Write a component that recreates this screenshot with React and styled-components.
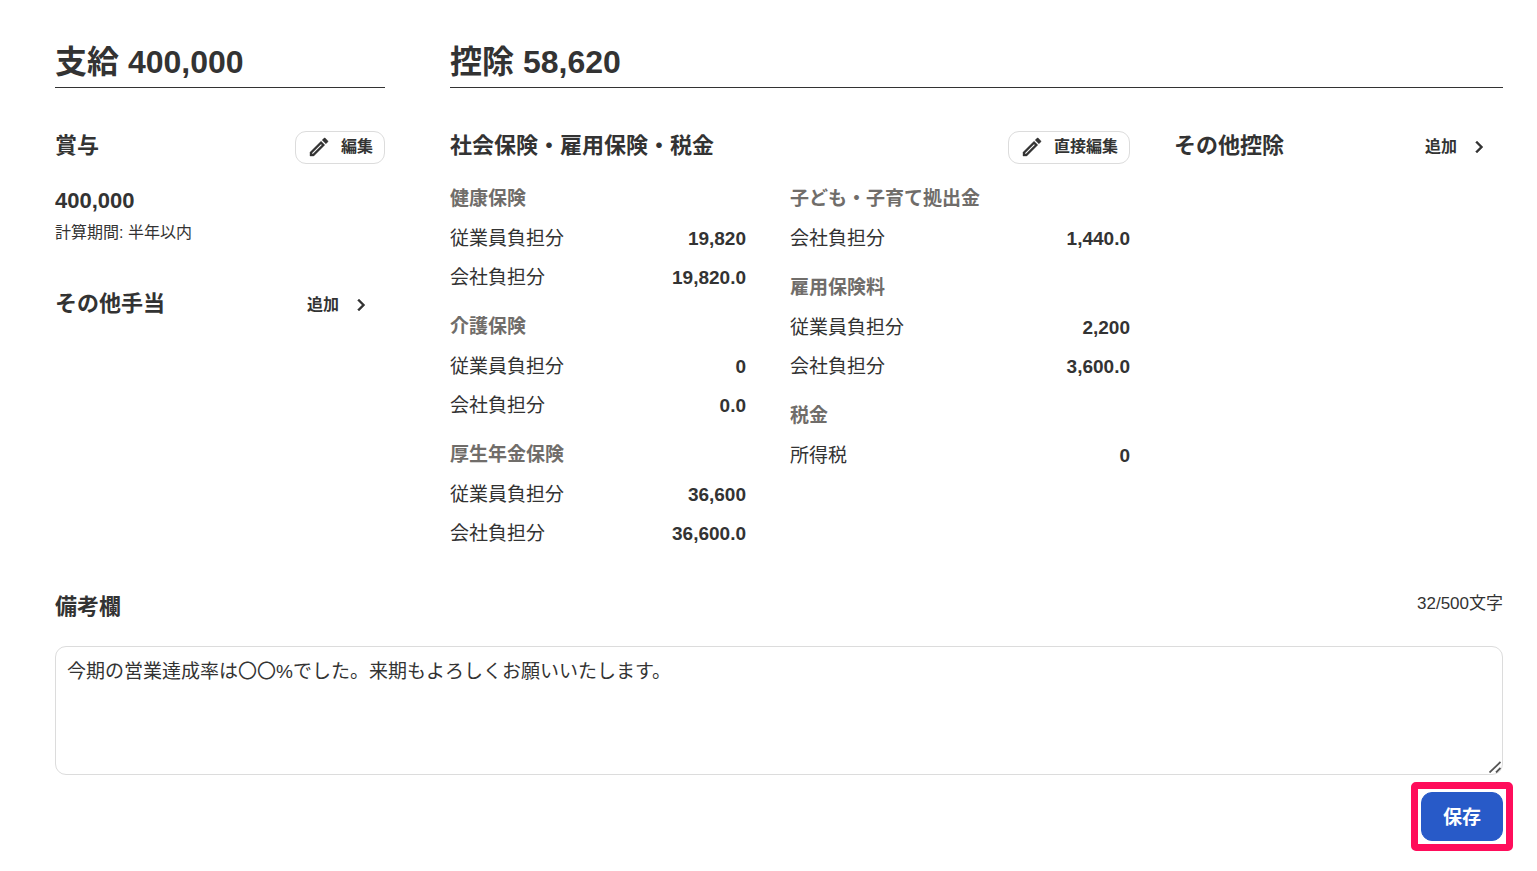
import { useState } from "react";
import styled, { createGlobalStyle } from "styled-components";
import { MdChevronRight, MdOutlineEdit } from "react-icons/md";

const GlobalStyle = createGlobalStyle`
  * {
    box-sizing: border-box;
  }

  body {
    margin: 0;
    background-color: #fff;
    color: #333;
    font-family: "Liberation Sans", "Noto Sans CJK JP", sans-serif;
    font-size: 19px;
  }
`;

const Page = styled.main`
  padding: 38px 34px 30px 55px;
`;

const Columns = styled.div`
  display: grid;
  grid-template-columns: 330fr 1053fr;
  column-gap: 65px;
`;

const Title = styled.h1`
  margin: 0 0 43px;
  border-bottom: 1px solid #333;
  font-size: 32px;
  line-height: 49px;
`;

const Deductions = styled.div`
  display: grid;
  grid-template-columns: 680fr 329fr;
  column-gap: 44px;
`;

const PanelHeader = styled.div`
  display: flex;
  align-items: flex-start;
  justify-content: space-between;
  min-height: 33px;
  margin-bottom: 15px;
`;

const PanelTitle = styled.h2`
  margin: 0;
  font-size: 22px;
  line-height: 30px;
`;

const Button = styled.button`
  display: flex;
  align-items: center;
  gap: 10px;
  height: 33px;
  padding: 0 11px 1px;
  border: 1px solid ${(props) => (props.$outlined ? "#dcdcdc" : "transparent")};
  border-radius: 11px;
  background-color: #fff;
  color: #333;
  font-family: inherit;
  font-size: 16px;
  font-weight: bold;
  line-height: 24px;
  cursor: pointer;

  svg {
    width: 24px;
    height: 24px;
  }

  path:not([fill="none"]) {
    stroke: currentColor;
    stroke-width: 0.4;
  }
`;

const Bonus = styled.div`
  margin: 23px 0 44px;
`;

const Amount = styled.p`
  margin: 0 0 6px;
  font-size: 22px;
  font-weight: bold;
  line-height: 28px;
`;

const Period = styled.p`
  margin: 0;
  font-size: 16px;
  line-height: 24px;
`;

const Groups = styled.div`
  display: grid;
  grid-template-columns: 1fr 1fr;
  align-items: start;
`;

const GroupColumn = styled.div`
  display: flex;
  flex-direction: column;
  gap: 10px;
  padding-right: ${(props) => (props.$spaced ? "44px" : "0")};
`;

const GroupTitle = styled.h3`
  margin: 0;
  color: #706d6a;
  font-size: 19px;
  line-height: 40px;
`;

const List = styled.dl`
  margin: 0;
`;

const Row = styled.div`
  display: flex;
  justify-content: space-between;
  line-height: 39px;
`;

const Value = styled.dd`
  margin: 0;
  font-weight: bold;
`;

const Notes = styled.section`
  margin-top: 37px;
`;

const NotesHeader = styled.div`
  display: flex;
  justify-content: space-between;
  margin-bottom: 23px;
`;

const NotesLabel = styled.label`
  font-size: 22px;
  font-weight: bold;
  line-height: 33px;
`;

const Counter = styled.span`
  font-size: 17px;
  line-height: 28px;
`;

const TextAreaBox = styled.div`
  position: relative;
`;

const TextArea = styled.textarea`
  display: block;
  width: 100%;
  height: 129px;
  padding: 11px;
  border: 1px solid #dcdcdc;
  border-radius: 11px;
  color: inherit;
  font-family: inherit;
  font-size: 19px;
  line-height: 28px;
  resize: vertical;

  &::-webkit-resizer {
    background-color: transparent;
  }
`;

const Grip = styled.svg`
  position: absolute;
  right: 2px;
  bottom: 2px;
  width: 12px;
  height: 12px;
  stroke: #555;
  stroke-width: 1.8;
  pointer-events: none;
`;

const Actions = styled.div`
  display: flex;
  justify-content: flex-end;
  margin-top: 17px;
`;

const Highlight = styled.div`
  position: relative;

  &::after {
    content: "";
    position: absolute;
    inset: -10px;
    border: 7px solid #ff0d5b;
    border-radius: 5px;
    pointer-events: none;
  }
`;

const SaveButton = styled.button`
  display: block;
  height: 49px;
  padding: 0 21px 3px;
  border: 1px solid #285ac8;
  border-radius: 11px;
  background-color: #285ac8;
  color: #fff;
  font-family: inherit;
  font-size: 19px;
  font-weight: bold;
  cursor: pointer;
`;

const insurance = [
  {
    title: "健康保険",
    rows: [
      ["従業員負担分", "19,820"],
      ["会社負担分", "19,820.0"],
    ],
  },
  {
    title: "介護保険",
    rows: [
      ["従業員負担分", "0"],
      ["会社負担分", "0.0"],
    ],
  },
  {
    title: "厚生年金保険",
    rows: [
      ["従業員負担分", "36,600"],
      ["会社負担分", "36,600.0"],
    ],
  },
];

const others = [
  { title: "子ども・子育て拠出金", rows: [["会社負担分", "1,440.0"]] },
  {
    title: "雇用保険料",
    rows: [
      ["従業員負担分", "2,200"],
      ["会社負担分", "3,600.0"],
    ],
  },
  { title: "税金", rows: [["所得税", "0"]] },
];

const Group = ({ title, rows }) => (
  <section>
    <GroupTitle>{title}</GroupTitle>
    <List>
      {rows.map(([label, value]) => (
        <Row key={label}>
          <dt>{label}</dt>
          <Value>{value}</Value>
        </Row>
      ))}
    </List>
  </section>
);

const EditButton = ({ children }) => (
  <Button type="button" $outlined>
    <MdOutlineEdit />
    {children}
  </Button>
);

const AddButton = () => (
  <Button type="button">
    追加
    <MdChevronRight />
  </Button>
);

const App = () => {
  const [note, setNote] = useState(
    "今期の営業達成率は〇〇%でした。来期もよろしくお願いいたします。"
  );

  return (
    <>
      <GlobalStyle />
      <Page lang="ja">
        <Columns>
          <section>
            <Title>支給 400,000</Title>
            <PanelHeader>
              <PanelTitle>賞与</PanelTitle>
              <EditButton>編集</EditButton>
            </PanelHeader>
            <Bonus>
              <Amount>400,000</Amount>
              <Period>計算期間: 半年以内</Period>
            </Bonus>
            <PanelHeader>
              <PanelTitle>その他手当</PanelTitle>
              <AddButton />
            </PanelHeader>
          </section>
          <section>
            <Title>控除 58,620</Title>
            <Deductions>
              <div>
                <PanelHeader>
                  <PanelTitle>社会保険・雇用保険・税金</PanelTitle>
                  <EditButton>直接編集</EditButton>
                </PanelHeader>
                <Groups>
                  <GroupColumn $spaced>
                    {insurance.map((group) => (
                      <Group key={group.title} {...group} />
                    ))}
                  </GroupColumn>
                  <GroupColumn>
                    {others.map((group) => (
                      <Group key={group.title} {...group} />
                    ))}
                  </GroupColumn>
                </Groups>
              </div>
              <div>
                <PanelHeader>
                  <PanelTitle>その他控除</PanelTitle>
                  <AddButton />
                </PanelHeader>
              </div>
            </Deductions>
          </section>
        </Columns>
        <Notes>
          <NotesHeader>
            <NotesLabel htmlFor="note">備考欄</NotesLabel>
            <Counter>{note.length}/500文字</Counter>
          </NotesHeader>
          <TextAreaBox>
            <TextArea
              id="note"
              maxLength={500}
              value={note}
              onChange={(e) => setNote(e.target.value)}
            />
            <Grip viewBox="0 0 12 12" aria-hidden="true">
              <path d="M.5 11.5l11-10.500M7 11.500l4.500-4.500" />
            </Grip>
          </TextAreaBox>
        </Notes>
        <Actions>
          <Highlight>
            <SaveButton type="button">保存</SaveButton>
          </Highlight>
        </Actions>
      </Page>
    </>
  );
};

export default App;
